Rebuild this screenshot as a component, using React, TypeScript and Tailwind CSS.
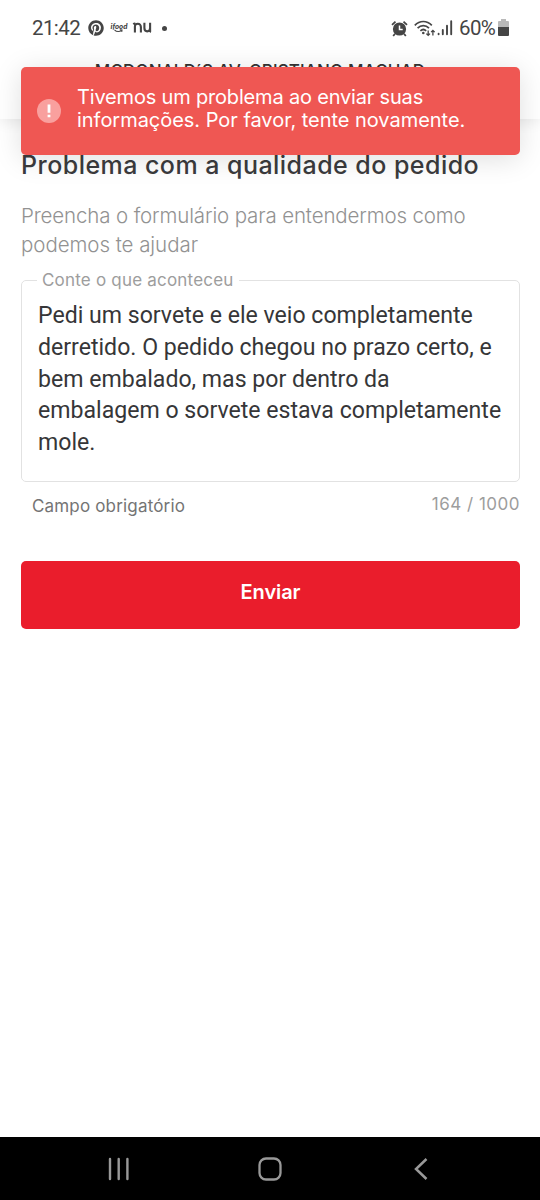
import React from "react";
import { FaPinterest } from "react-icons/fa";

function StatusBar() {
  return (
    <div className="flex h-14 items-center justify-between pr-[31px] pl-8 text-[#454545]">
      <div className="flex items-center">
        <span className="w-[49px] whitespace-nowrap font-['Roboto',sans-serif] text-[20.5px] leading-6 tracking-[-0.6px]">21:42</span>
        <FaPinterest className="ml-[7px] size-4" />
        <svg className="ml-[6px] h-4 w-[18px]" viewBox="0 0 18 16" fill="none">
          <text x="0.5" y="9" fontSize="7.5" fontWeight="900" fontStyle="italic" fontFamily="Lato, sans-serif" fill="#454545" textLength="17" lengthAdjust="spacingAndGlyphs">ifood</text>
          <path d="M4.5 9.8c2.2 2.4 5.3 2.2 7.2.3M9.8 9.8l2.2.2-.3 1.9" stroke="#454545" strokeWidth="1.1" />
        </svg>
        <svg className="ml-[4px] h-4 w-5" viewBox="0 0 20 16" fill="none" stroke="#454545" strokeWidth="2.1">
          <path d="M2.9 12.4V6.8C2.9 4.8 4 3.8 5.8 3.8c1.9 0 3.1 1.2 3.1 3.3v5.3M1.3 4.2c.6-.5 1.3-.6 2-.5M12.4 2.8v5.3c0 2.2 1 3.3 2.8 3.3s2.9-1.1 2.9-3.3V2.8M18.1 8v2.5c0 .8.3 1.2.9 1.4" />
        </svg>
        <span className="ml-[10px] size-[5px] rounded-full bg-[#454545]" />
      </div>
      <div className="flex items-center">
        <svg className="h-[17px] w-[17px]" viewBox="0 0 17 17" fill="none">
          <circle cx="8.5" cy="9" r="6.6" fill="#454545" />
          <path d="M1 4.8 4.5 1.6M16 4.8l-3.5-3.2M4 13.8l-1.8 2.2M13 13.8l1.8 2.2" stroke="#454545" strokeWidth="1.8" />
          <path d="M8.5 5.4v4.2h3.2" stroke="#fff" strokeWidth="1.5" />
        </svg>
        <svg className="ml-[6px] -mt-px h-[18px] w-[22px]" viewBox="0 0 22 18" fill="none" stroke="#454545" strokeWidth="1.7">
          <path d="M.8 6.3c4.9-5.1 12.1-5.1 17 0M3.6 9.1c3.3-3.4 8.1-3.4 11.4 0M6.4 11.8c1.8-1.6 4-1.6 5.8 0" />
          <circle cx="9.3" cy="14" r="1.3" fill="#454545" stroke="none" />
          <path d="M14.2 11.4v5M12.4 14.6l1.8 1.8 1.8-1.8M18.9 16.5v-5M17.1 13.1l1.8-1.8 1.8 1.8" strokeWidth="1.3" />
        </svg>
        <svg className="ml-px h-4 w-[16px]" viewBox="0 0 16 16" stroke="#454545" strokeWidth="1.9" strokeLinecap="round">
          <path d="M1.6 13.8v.4M5.8 10v4.2M10 5.8v8.4M14.2 1.2v13" />
        </svg>
        <span className="ml-[6px] w-[39px] whitespace-nowrap font-['Roboto',sans-serif] text-[20.5px] leading-6 tracking-[-0.6px]">60%</span>
        <svg className="-mt-px h-[17px] w-[11px]" viewBox="0 0 11 17">
          <path d="M3 0h5v2H3zM1 2h9q1 0 1 1v6H0V3q0-1 1-1z" fill="#b9b9b9" />
          <path d="M0 8h11v8q0 1-1 1H1q-1 0-1-1z" fill="#454545" />
        </svg>
      </div>
    </div>
  );
}

function Toast() {
  return (
    <div role="alert" className="absolute top-[67px] left-[21px] flex h-[88px] w-[499px] rounded-[5px] bg-[#ef5753] pl-4 shadow-[0_4px_28px_rgba(0,0,0,0.13)]">
      <svg className="mt-8 size-6 shrink-0" viewBox="0 0 24 24">
        <circle cx="12" cy="12" r="12" fill="#f9a09e" />
        <path d="M10.6 5.5h2.8v8.2h-2.8zM10.6 15.7h2.8v2.6h-2.8z" fill="#fff" />
      </svg>
      <div className="mt-[19px] ml-4 whitespace-nowrap text-[20px] leading-[23px] text-white">
        <p className="tracking-[-0.18px]">Tivemos um problema ao enviar suas</p>
        <p className="tracking-[-0.03px]">informações. Por favor, tente novamente.</p>
      </div>
    </div>
  );
}

export default function App() {
  return (
    <div className="relative flex h-[1200px] w-[540px] flex-col overflow-hidden bg-white font-['Inter',sans-serif]">
      <header className="h-[119px] shrink-0 bg-white shadow-[0_2px_14px_rgba(0,0,0,0.09)]">
        <StatusBar />
        <div className="mt-[3px] flex justify-center pr-5 text-[17px] leading-6 font-medium whitespace-nowrap text-[#333]">
          <span className="tracking-[0.15px]">MCDONALD´S AV. CRISTIANO MACHAD</span>
        </div>
      </header>
      <main className="flex flex-1 flex-col pt-[30px] pr-5 pl-[21px]">
        <h1 className="text-[25px] leading-8 font-medium tracking-[0.46px] whitespace-nowrap text-[#3b3b3d]">Problema com a qualidade do pedido</h1>
        <div className="mt-[21px] text-[20.5px] leading-[28.5px] font-light whitespace-nowrap text-[#929292]">
          <p className="tracking-[-0.14px]">Preencha o formulário para entendermos como</p>
          <p className="tracking-[-0.05px]">podemos te ajudar</p>
        </div>
        <fieldset className="mt-[10px] h-[213px] min-w-0 rounded-[5px] border-[1.5px] border-[#e2e2e2] pl-4">
          <legend className="-ml-px px-[5px] text-[17px] leading-[22px] tracking-[0.2px] text-[#9d9d9d]">Conte o que aconteceu</legend>
          <p className="mt-[9px] font-['Roboto',sans-serif] text-[23.1px] leading-[31.8px] whitespace-nowrap text-[#363638]">
            Pedi um sorvete e ele veio completamente<br />
            derretido. O pedido chegou no prazo certo, e<br />
            bem embalado, mas por dentro da<br />
            embalagem o sorvete estava completamente<br />
            mole.
          </p>
        </fieldset>
        <div className="mt-[10px] flex h-6 justify-between pl-[11px] text-[17px] leading-6 whitespace-nowrap">
          <span className="pt-[2px] tracking-[0.17px] text-[#747474]">Campo obrigatório</span>
          <span className="tracking-[0.5px] text-[#9d9d9d]">164 / 1000</span>
        </div>
        <button className="mt-[44.5px] h-[68px] rounded-[5px] bg-[#ea1d2c] pb-[6px] text-[20px] font-semibold tracking-[-0.1px] text-white">Enviar</button>
      </main>
      <nav className="flex h-[63px] shrink-0 items-center justify-between bg-black pt-px pr-[112px] pl-[108px]">
        <svg className="h-6 w-6" viewBox="0 0 24 24" stroke="#999" strokeWidth="2.4" strokeLinecap="round"><path d="M2 2v20M10.7 2v20M19.4 2v20" /></svg>
        <svg className="mr-[6px] h-6 w-6" viewBox="0 0 24 24" fill="none" stroke="#999" strokeWidth="2.3"><rect x="1.5" y="1.5" width="21" height="21" rx="6.5" /></svg>
        <svg className="h-6 w-[14px]" viewBox="0 0 14 24" fill="none" stroke="#999" strokeWidth="2.5"><path d="M12.5 2 2 12l10.5 10" /></svg>
      </nav>
      <Toast />
    </div>
  );
}
